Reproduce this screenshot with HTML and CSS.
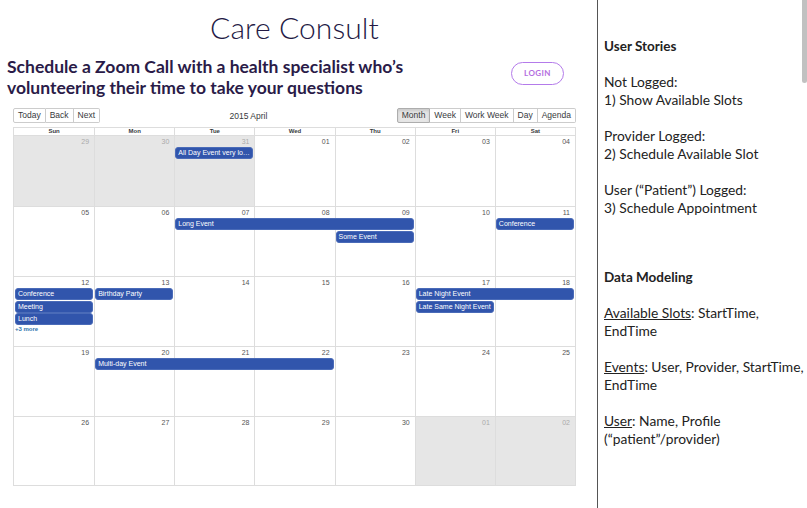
FILE: index.html
```html
<!DOCTYPE html>
<html lang="en">
<head>
<meta charset="utf-8">
<title>Care Consult</title>
<link rel="stylesheet" href="styles.css">
</head>
<body>
<div class="page">
  <main class="main">
    <h1 class="title">Care Consult</h1>
    <div class="intro">
      <h2 class="tagline">Schedule a Zoom Call with a health specialist who’s volunteering their time to take your questions</h2>
      <button class="login">LOGIN</button>
    </div>
    <div class="calendar">
      <div class="toolbar">
        <div class="btn-group">
          <button class="tb">Today</button><button class="tb">Back</button><button class="tb">Next</button>
        </div>
        <div class="label">2015 April</div>
        <div class="btn-group">
          <button class="tb active">Month</button><button class="tb">Week</button><button class="tb">Work Week</button><button class="tb">Day</button><button class="tb">Agenda</button>
        </div>
      </div>
      <div class="month">
        <div class="head">
          <div class="hd">Sun</div><div class="hd">Mon</div><div class="hd">Tue</div><div class="hd">Wed</div><div class="hd">Thu</div><div class="hd">Fri</div><div class="hd">Sat</div>
        </div>

        <div class="week">
          <div class="bg off c1"></div><div class="bg off c2"></div><div class="bg off c3"></div><div class="bg c4"></div><div class="bg c5"></div><div class="bg c6"></div><div class="bg c7"></div>
          <div class="dt off c1">29</div><div class="dt off c2">30</div><div class="dt off c3">31</div><div class="dt c4">01</div><div class="dt c5">02</div><div class="dt c6">03</div><div class="dt c7">04</div>
          <div class="ev r1 c3 s1">All Day Event very lo…</div>
        </div>

        <div class="week">
          <div class="bg c1"></div><div class="bg c2"></div><div class="bg c3"></div><div class="bg c4"></div><div class="bg c5"></div><div class="bg c6"></div><div class="bg c7"></div>
          <div class="dt c1">05</div><div class="dt c2">06</div><div class="dt c3">07</div><div class="dt c4">08</div><div class="dt c5">09</div><div class="dt c6">10</div><div class="dt c7">11</div>
          <div class="ev r1 c3 s3">Long Event</div>
          <div class="ev r1 c7 s1">Conference</div>
          <div class="ev r2 c5 s1">Some Event</div>
        </div>

        <div class="week">
          <div class="bg c1"></div><div class="bg c2"></div><div class="bg c3"></div><div class="bg c4"></div><div class="bg c5"></div><div class="bg c6"></div><div class="bg c7"></div>
          <div class="dt c1">12</div><div class="dt c2">13</div><div class="dt c3">14</div><div class="dt c4">15</div><div class="dt c5">16</div><div class="dt c6">17</div><div class="dt c7">18</div>
          <div class="ev r1 c1 s1">Conference</div>
          <div class="ev r1 c2 s1">Birthday Party</div>
          <div class="ev r1 c6 s2">Late Night Event</div>
          <div class="ev r2 c1 s1">Meeting</div>
          <div class="ev r2 c6 s1">Late Same Night Event</div>
          <div class="ev r3 c1 s1">Lunch</div>
          <div class="more r4 c1">+3 more</div>
        </div>

        <div class="week">
          <div class="bg c1"></div><div class="bg c2"></div><div class="bg c3"></div><div class="bg c4"></div><div class="bg c5"></div><div class="bg c6"></div><div class="bg c7"></div>
          <div class="dt c1">19</div><div class="dt c2">20</div><div class="dt c3">21</div><div class="dt c4">22</div><div class="dt c5">23</div><div class="dt c6">24</div><div class="dt c7">25</div>
          <div class="ev r1 c2 s3">Multi-day Event</div>
        </div>

        <div class="week">
          <div class="bg c1"></div><div class="bg c2"></div><div class="bg c3"></div><div class="bg c4"></div><div class="bg c5"></div><div class="bg off c6"></div><div class="bg off c7"></div>
          <div class="dt c1">26</div><div class="dt c2">27</div><div class="dt c3">28</div><div class="dt c4">29</div><div class="dt c5">30</div><div class="dt off c6">01</div><div class="dt off c7">02</div>
        </div>
      </div>
    </div>
  </main>
  <aside class="side">
    <h3 class="side-h">User Stories</h3>
    <p class="side-p">Not Logged:<br>1) Show Available Slots</p>
    <p class="side-p">Provider Logged:<br>2) Schedule Available Slot</p>
    <p class="side-p">User (“Patient”) Logged:<br>3) Schedule Appointment</p>
    <h3 class="side-h side-h2">Data Modeling</h3>
    <p class="side-p"><span class="ul">Available Slots</span>: StartTime,<br>EndTime</p>
    <p class="side-p"><span class="ul">Events</span>: User, Provider, StartTime,<br>EndTime</p>
    <p class="side-p"><span class="ul">User</span>: Name, Profile<br>(“patient”/provider)</p>
    <div class="thumb"></div>
  </aside>
</div>
</body>
</html>
```

FILE: styles.css
```css
* { box-sizing: border-box; }
html, body { margin: 0; padding: 0; background: #fff; }
body { height: 508px; overflow: hidden; }

.page {
  display: flex;
  height: 508px;
}

.main {
  width: 597px;
  flex: none;
  padding: 0 21px 0 13px;
}

.title {
  margin: 9px 0 0;
  text-align: center;
  font-family: "Lato", sans-serif;
  font-weight: 300;
  font-size: 30px;
  line-height: 36px;
  color: #241a45;
  letter-spacing: 0.1px;
}

.intro {
  display: flex;
  align-items: center;
  justify-content: space-between;
  margin: 11px 12px 0 -6px;
}

.tagline {
  margin: 0;
  width: 410px;
  font-family: "Lato", sans-serif;
  font-weight: 700;
  font-size: 17.5px;
  line-height: 21px;
  color: #2a1b48;
}

.login {
  width: 53px;
  height: 23px;
  margin-top: -8px;
  border-radius: 12px;
  border: 1.5px solid #b47bea;
  background: #fff;
  color: #b46ee0;
  font-family: "Lato", sans-serif;
  font-weight: 700;
  font-size: 8px;
  letter-spacing: 0.4px;
  padding: 0;
}

.calendar {
  margin-top: 10px;
  font-family: "Liberation Sans", Arial, sans-serif;
}

.toolbar {
  display: flex;
  align-items: center;
  height: 15px;
  margin-bottom: 4px;
}

.btn-group { display: flex; }

.tb {
  height: 15px;
  padding: 0 4px;
  margin: 0;
  border: 1px solid #ccc;
  border-left-width: 0;
  background: #fff;
  color: #373a3c;
  font-family: "Liberation Sans", Arial, sans-serif;
  font-size: 8.5px;
  line-height: 13px;
}
.tb:first-child { border-left-width: 1px; border-radius: 2px 0 0 2px; }
.tb:last-child { border-radius: 0 2px 2px 0; }
.tb.active {
  background: #e6e6e6;
  border-color: #adadad;
  box-shadow: inset 0 2px 3px rgba(0,0,0,0.12);
}

.label {
  flex: 1;
  text-align: center;
  font-size: 8.5px;
  color: #373a3c;
}

.month {
  border: 1px solid #ddd;
  width: 563px;
}

.head {
  display: grid;
  grid-template-columns: repeat(7, 1fr);
  border-bottom: 1px solid #ddd;
}
.hd {
  height: 7px;
  text-align: center;
  font-size: 6px;
  font-weight: 700;
  line-height: 7px;
  color: #373a3c;
}
.hd + .hd { border-left: 1px solid #ddd; }

.week {
  display: grid;
  grid-template-columns: repeat(7, 1fr);
  grid-template-rows: 11px 12.5px 12.5px 12.5px 7px 1fr;
  height: 70px;
}
.week + .week { border-top: 1px solid #ddd; }
.week:last-child { height: 69px; }

.bg { grid-row: 1 / -1; }
.bg.off { background: #e6e6e6; }
.bg.c2, .bg.c3, .bg.c4, .bg.c5, .bg.c6, .bg.c7 { border-left: 1px solid #ddd; }

.c1 { grid-column-start: 1; }
.c2 { grid-column-start: 2; }
.c3 { grid-column-start: 3; }
.c4 { grid-column-start: 4; }
.c5 { grid-column-start: 5; }
.c6 { grid-column-start: 6; }
.c7 { grid-column-start: 7; }
.s1 { grid-column-end: span 1; }
.s2 { grid-column-end: span 2; }
.s3 { grid-column-end: span 3; }

.dt {
  grid-row: 1;
  text-align: right;
  padding-right: 5px;
  font-size: 7px;
  line-height: 11px;
  color: #555;
}
.dt.off { color: #aaa; }

.r1 { grid-row: 2; }
.r2 { grid-row: 3; }
.r3 { grid-row: 4; }
.r4 { grid-row: 5; }

.ev {
  margin: 0 1px 0.5px 1px;
  background: #3155ac;
  border: 1px solid #4a6bb8;
  border-radius: 3px;
  color: #fff;
  font-size: 7px;
  line-height: 10px;
  padding: 0 2px;
  white-space: nowrap;
  overflow: hidden;
}

.more {
  padding-left: 1px;
  font-size: 6px;
  font-weight: 700;
  line-height: 7px;
  color: #3174ad;
}

.side {
  position: relative;
  flex: 1;
  border-left: 1px solid #555;
  padding: 37px 0 0 6px;
  font-family: "Lato", sans-serif;
  font-size: 13.8px;
  line-height: 18px;
  color: #222;
}

.side-h {
  margin: 0 0 18px;
  font-size: 13.5px;
  font-weight: 700;
  line-height: 18px;
}
.side-h2 { margin-top: 51px; }

.side-p { margin: 0 0 18px; white-space: nowrap; }

.ul { text-decoration: underline; }

.thumb {
  position: absolute;
  top: 0;
  right: 0;
  width: 5px;
  height: 83px;
  background: #c1c1c1;
  border-radius: 0 0 3px 3px;
}
```
